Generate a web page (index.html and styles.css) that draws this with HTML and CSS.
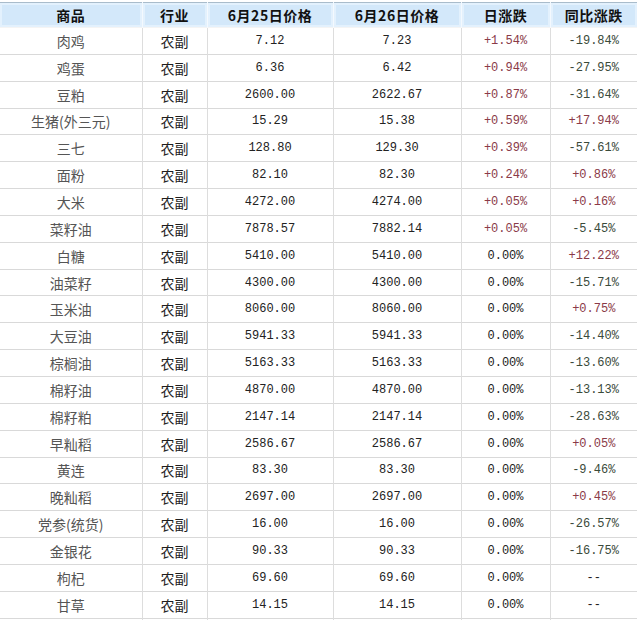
FILE: index.html
```html
<!DOCTYPE html>
<html lang="zh">
<head>
<meta charset="utf-8">
<title>农副产品价格</title>
<link rel="stylesheet" href="styles.css">
</head>
<body>
<table class="prices">
  <colgroup>
    <col class="c-name"><col class="c-ind"><col class="c-p1"><col class="c-p2"><col class="c-day"><col class="c-yoy">
  </colgroup>
  <thead>
    <tr><th>商品</th><th>行业</th><th>6月25日价格</th><th>6月26日价格</th><th>日涨跌</th><th>同比涨跌</th></tr>
  </thead>
  <tbody>
    <tr><td class="name">肉鸡</td><td class="ind">农副</td><td class="num">7.12</td><td class="num">7.23</td><td class="num up">+1.54%</td><td class="num down">-19.84%</td></tr>
    <tr><td class="name">鸡蛋</td><td class="ind">农副</td><td class="num">6.36</td><td class="num">6.42</td><td class="num up">+0.94%</td><td class="num down">-27.95%</td></tr>
    <tr><td class="name">豆粕</td><td class="ind">农副</td><td class="num">2600.00</td><td class="num">2622.67</td><td class="num up">+0.87%</td><td class="num down">-31.64%</td></tr>
    <tr><td class="name">生猪(外三元)</td><td class="ind">农副</td><td class="num">15.29</td><td class="num">15.38</td><td class="num up">+0.59%</td><td class="num up">+17.94%</td></tr>
    <tr><td class="name">三七</td><td class="ind">农副</td><td class="num">128.80</td><td class="num">129.30</td><td class="num up">+0.39%</td><td class="num down">-57.61%</td></tr>
    <tr><td class="name">面粉</td><td class="ind">农副</td><td class="num">82.10</td><td class="num">82.30</td><td class="num up">+0.24%</td><td class="num up">+0.86%</td></tr>
    <tr><td class="name">大米</td><td class="ind">农副</td><td class="num">4272.00</td><td class="num">4274.00</td><td class="num up">+0.05%</td><td class="num up">+0.16%</td></tr>
    <tr><td class="name">菜籽油</td><td class="ind">农副</td><td class="num">7878.57</td><td class="num">7882.14</td><td class="num up">+0.05%</td><td class="num down">-5.45%</td></tr>
    <tr><td class="name">白糖</td><td class="ind">农副</td><td class="num">5410.00</td><td class="num">5410.00</td><td class="num">0.00%</td><td class="num up">+12.22%</td></tr>
    <tr><td class="name">油菜籽</td><td class="ind">农副</td><td class="num">4300.00</td><td class="num">4300.00</td><td class="num">0.00%</td><td class="num down">-15.71%</td></tr>
    <tr><td class="name">玉米油</td><td class="ind">农副</td><td class="num">8060.00</td><td class="num">8060.00</td><td class="num">0.00%</td><td class="num up">+0.75%</td></tr>
    <tr><td class="name">大豆油</td><td class="ind">农副</td><td class="num">5941.33</td><td class="num">5941.33</td><td class="num">0.00%</td><td class="num down">-14.40%</td></tr>
    <tr><td class="name">棕榈油</td><td class="ind">农副</td><td class="num">5163.33</td><td class="num">5163.33</td><td class="num">0.00%</td><td class="num down">-13.60%</td></tr>
    <tr><td class="name">棉籽油</td><td class="ind">农副</td><td class="num">4870.00</td><td class="num">4870.00</td><td class="num">0.00%</td><td class="num down">-13.13%</td></tr>
    <tr><td class="name">棉籽粕</td><td class="ind">农副</td><td class="num">2147.14</td><td class="num">2147.14</td><td class="num">0.00%</td><td class="num down">-28.63%</td></tr>
    <tr><td class="name">早籼稻</td><td class="ind">农副</td><td class="num">2586.67</td><td class="num">2586.67</td><td class="num">0.00%</td><td class="num up">+0.05%</td></tr>
    <tr><td class="name">黄连</td><td class="ind">农副</td><td class="num">83.30</td><td class="num">83.30</td><td class="num">0.00%</td><td class="num down">-9.46%</td></tr>
    <tr><td class="name">晚籼稻</td><td class="ind">农副</td><td class="num">2697.00</td><td class="num">2697.00</td><td class="num">0.00%</td><td class="num up">+0.45%</td></tr>
    <tr><td class="name">党参(统货)</td><td class="ind">农副</td><td class="num">16.00</td><td class="num">16.00</td><td class="num">0.00%</td><td class="num down">-26.57%</td></tr>
    <tr><td class="name">金银花</td><td class="ind">农副</td><td class="num">90.33</td><td class="num">90.33</td><td class="num">0.00%</td><td class="num down">-16.75%</td></tr>
    <tr><td class="name">枸杞</td><td class="ind">农副</td><td class="num">69.60</td><td class="num">69.60</td><td class="num">0.00%</td><td class="num">--</td></tr>
    <tr><td class="name">甘草</td><td class="ind">农副</td><td class="num">14.15</td><td class="num">14.15</td><td class="num">0.00%</td><td class="num">--</td></tr>
    <tr><td class="name">&nbsp;</td><td class="ind">&nbsp;</td><td class="num">&nbsp;</td><td class="num">&nbsp;</td><td class="num">&nbsp;</td><td class="num">&nbsp;</td></tr>
  </tbody>
</table>
</body>
</html>
```

FILE: styles.css
```css
html, body {
  margin: 0;
  padding: 0;
  background: #ffffff;
}

body {
  overflow: hidden;
  font-family: "Noto Sans CJK SC", "Liberation Sans", sans-serif;
}

.prices {
  width: 637px;
  table-layout: fixed;
  border-collapse: collapse;
  border-spacing: 0;
  margin-top: 2px;
}

.c-name { width: 142px; }
.c-ind { width: 65px; }
.c-p1 { width: 126px; }
.c-p2 { width: 128px; }
.c-day { width: 89px; }
.c-yoy { width: 87px; }

.prices thead tr {
  height: 25px;
  border-top: 1px solid #a9bccb;
}

.prices th {
  background: #d3e8fa;
  box-shadow: inset 0 0 0 2px #e3f1fd;
  border-left: 1px solid #f4f9fe;
  font-size: 14px;
  font-weight: bold;
  color: #111;
  padding: 0;
  text-align: center;
  line-height: 24px;
  white-space: nowrap;
  letter-spacing: 0.5px;
}

.prices th:first-child {
  border-left: none;
}

.prices tbody tr {
  height: 26.85px;
  border-bottom: 1px solid #d9d9d9;
}

.prices tbody tr:first-child {
  border-top: 1px solid #f4f4f4;
}

.prices td {
  padding: 0;
  text-align: center;
  border-left: 1px solid #dddddd;
  white-space: nowrap;
  line-height: 18px;
}

.prices td:first-child {
  border-left: none;
}

.name {
  font-size: 14px;
  color: #555;
}

.ind {
  font-size: 14px;
  color: #1e1e1e;
}

.num {
  font-family: "Liberation Mono", "DejaVu Sans Mono", monospace;
  font-size: 12px;
  color: #222;
}

.up {
  color: #8a3a48;
}

.down {
  color: #3a4a3a;
}
```
